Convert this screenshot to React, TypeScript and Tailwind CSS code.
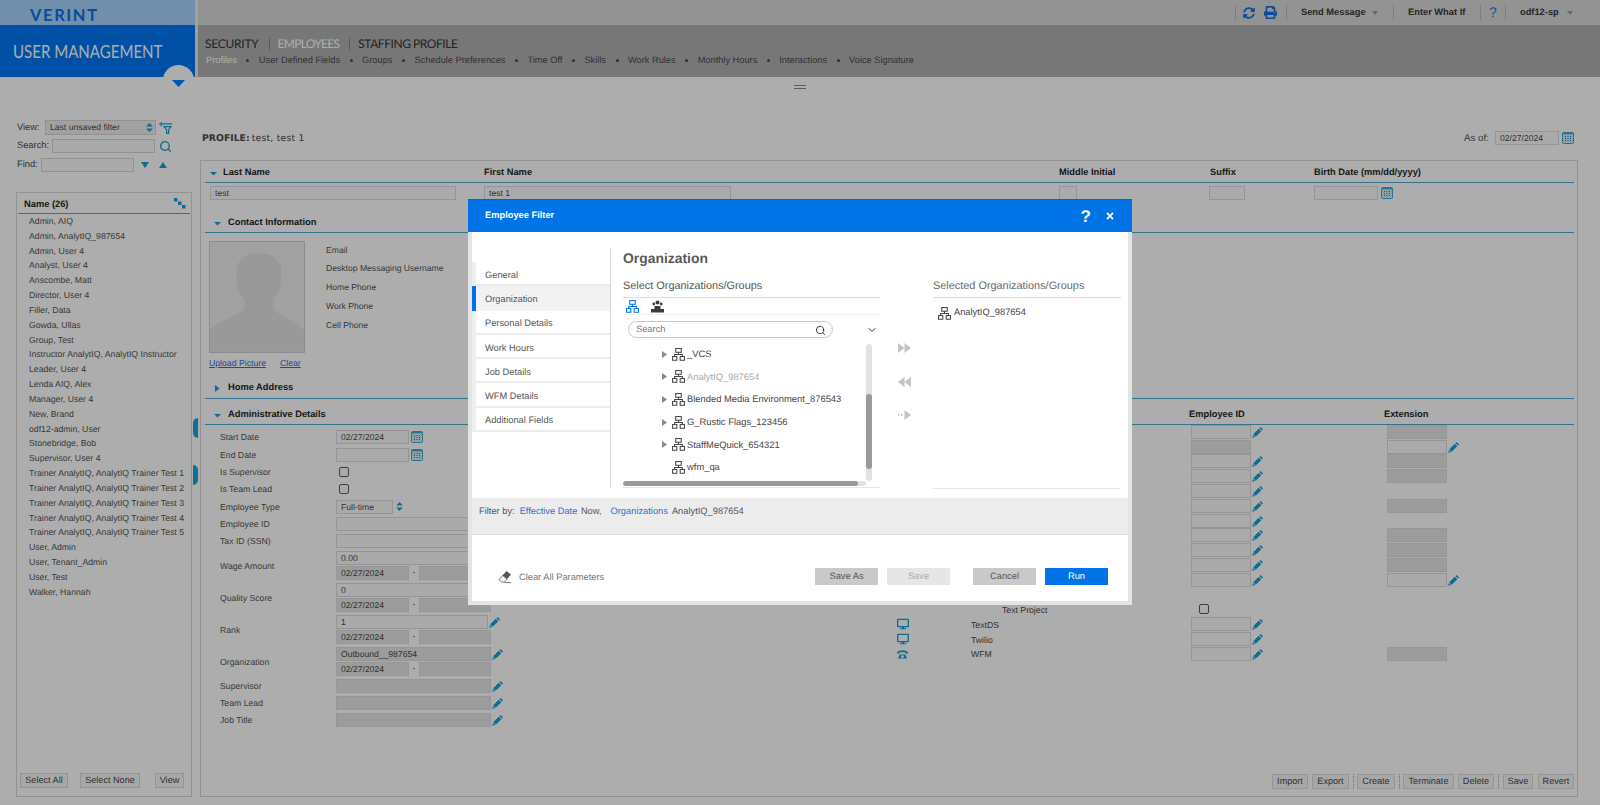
import React from "react";
import { FaPrint, FaSyncAlt, FaDesktop, FaTimes } from "react-icons/fa";
import { Search, ChevronDown } from "lucide-react";

const names = ["Admin, AIQ","Admin, AnalytIQ_987654","Admin, User 4","Analyst, User 4","Anscombe, Matt","Director, User 4","Filler, Data","Gowda, Ullas","Group, Test","Instructor AnalytIQ, AnalytIQ Instructor","Leader, User 4","Lenda AIQ, Alex","Manager, User 4","New, Brand","odf12-admin, User","Stonebridge, Bob","Supervisor, User 4","Trainer AnalytIQ, AnalytIQ Trainer Test 1","Trainer AnalytIQ, AnalytIQ Trainer Test 2","Trainer AnalytIQ, AnalytIQ Trainer Test 3","Trainer AnalytIQ, AnalytIQ Trainer Test 4","Trainer AnalytIQ, AnalytIQ Trainer Test 5","User, Admin","User, Tenant_Admin","User, Test","Walker, Hannah"];
const subTabs = ["Profiles","User Defined Fields","Groups","Schedule Preferences","Time Off","Skills","Work Rules","Monthly Hours","Interactions","Voice Signature"];
const navItems = ["General","Organization","Personal Details","Work Hours","Job Details","WFM Details","Additional Fields"];
const tree = [
  { t: "_VCS", arrow: true, muted: false },
  { t: "AnalytIQ_987654", arrow: true, muted: true },
  { t: "Blended Media Environment_876543", arrow: true, muted: false },
  { t: "G_Rustic Flags_123456", arrow: true, muted: false },
  { t: "StaffMeQuick_654321", arrow: true, muted: false },
  { t: "wfm_qa", arrow: false, muted: false },
];

function OrgIcon({ className }: { className?: string }) {
  return (
    <svg viewBox="0 0 14 14" className={className} fill="none" stroke="currentColor" strokeWidth="1.1">
      <rect x="4" y="0.6" width="6" height="4" />
      <path d="M7 4.6V7M2.8 9.2V7H11.2V9.2" />
      <rect x="0.6" y="9.2" width="4.6" height="4" />
      <rect x="8.8" y="9.2" width="4.6" height="4" />
    </svg>
  );
}
function Pencil() {
  return (
    <svg viewBox="0 0 12 12" className="w-[12px] h-[12px] shrink-0 text-[#14a0d4]" fill="currentColor">
      <path d="M8.6.9 11.1 3.4 9.9 4.6 7.4 2.1ZM6.8 2.7 9.3 5.2 3.7 10.8 1.2 8.3ZM.9 8.9 3.1 11.1.3 11.7Z" />
    </svg>
  );
}
function Cal() {
  return (
    <svg viewBox="0 0 12 12" className="w-[12px] h-[12px] shrink-0" fill="none">
      <rect x="0.5" y="0.5" width="11" height="11" rx="1" fill="#d4ecf7" stroke="#3aa9d6" />
      <path d="M1 1.6H11" stroke="#3aa9d6" strokeWidth="1.4" />
      <path d="M3 4.5H4M5.5 4.5H6.5M8 4.5H9M3 6.5H4M5.5 6.5H6.5M8 6.5H9M3 8.5H4M5.5 8.5H6.5M8 8.5H9" stroke="#1a7fb0" />
    </svg>
  );
}
function Spinner({ className }: { className?: string }) {
  return (
    <svg viewBox="0 0 8 11" className={className} fill="#1a9fd0">
      <path d="M4 0 8 4.2H0ZM0 6.8H8L4 11Z" />
    </svg>
  );
}
function Caret({ open }: { open: boolean }) {
  return (
    <svg viewBox={open ? "0 0 7 5" : "0 0 6 7"} className={open ? "w-[7px] h-[5px] text-[#1a9fd0]" : "w-[6px] h-[7px] text-[#1a9fd0]"} fill="currentColor">
      {open ? <path d="M0 1H7L3.5 4.5Z" /> : <path d="M1 0 5.5 3.5 1 7Z" />}
    </svg>
  );
}
function Inp({ className, children }: { className: string; children?: React.ReactNode }) {
  return <div className={"h-[14px] border border-[#dcdcdc] bg-[#fbfbfb] px-[4px] text-[8.6px] leading-[12px] text-[#4a4a4a] " + className}>{children}</div>;
}
function Dis({ className, children }: { className: string; children?: React.ReactNode }) {
  return <div className={"h-[14px] border border-[#dedede] bg-[#e6e6e6] px-[4px] text-[8.6px] leading-[12px] text-[#4a4a4a] " + className}>{children}</div>;
}
function Btn({ className, children }: { className: string; children: React.ReactNode }) {
  return <div className={"h-[15px] border border-[#dcdcdc] bg-[#f6f6f6] flex items-center justify-center text-[9.1px] text-[#4a4a4a] " + className}>{children}</div>;
}
function Dashed({ className }: { className: string }) {
  return <div className={"h-[15px] w-0 border-l border-dotted border-[#a0a0a0] " + className} />;
}
function Check({ className }: { className?: string }) {
  return <div className={"w-[10px] h-[10px] rounded-[2px] border border-[#5c5c5c] bg-[#fbfbfb] " + (className ?? "")} />;
}
function DateRange({ withDate }: { withDate: string }) {
  return (
    <div className="flex items-center mt-[1px]">
      <Dis className="w-[73px]">{withDate}</Dis>
      <span className="w-[10px] text-center text-[8.6px] text-[#4a4a4a]">-</span>
      <Dis className="w-[72px]" />
    </div>
  );
}
function Field({ label, h, tall, children }: { label: string; h: string; tall?: boolean; children: React.ReactNode }) {
  return (
    <div className={"flex items-start " + h}>
      <div className={"w-[131px] pl-[15px] pt-[2px] text-[8.7px] text-[#555] flex items-center " + (tall ? "h-[31px]" : "h-[14px]")}>{label}</div>
      <div>{children}</div>
    </div>
  );
}
function Section({ open, title, h, pt, x, children }: { open: boolean; title: string; h: string; pt: string; x?: boolean; children?: React.ReactNode }) {
  return (
    <div className={"flex items-center border-b border-[#4fa9d8] shrink-0 " + h + " " + pt}>
      <div className="w-[23px] flex justify-center pl-[1px] pt-[1px]"><Caret open={open} /></div>
      <span className={"text-[9.3px] font-bold text-[#262626] " + (x ? "w-[961px]" : "")}>{title}</span>
      {children}
    </div>
  );
}

const rows: { icon?: "d" | "p"; label?: string; emp: "l" | "g" | "lp" | "n" | "c"; ext: "n" | "g" | "lp" }[] = [
  { emp: "lp", ext: "g" }, { emp: "g", ext: "lp" }, { emp: "lp", ext: "g" }, { emp: "lp", ext: "g" },
  { emp: "lp", ext: "n" }, { emp: "lp", ext: "g" }, { emp: "lp", ext: "n" }, { emp: "lp", ext: "g" },
  { emp: "lp", ext: "g" }, { emp: "lp", ext: "g" }, { emp: "lp", ext: "lp" }, { emp: "n", ext: "n" },
  { emp: "c", ext: "n", label: "Text Project" },
  { icon: "d", label: "TextDS", emp: "lp", ext: "n" },
  { icon: "d", label: "Twilio", emp: "lp", ext: "n" },
  { icon: "p", label: "WFM", emp: "lp", ext: "g" },
];

export default function App() {
  return (
    <div className="relative w-[1600px] h-[805px] overflow-hidden bg-white font-['Liberation_Sans',Arial,sans-serif] text-[9.3px] text-[#555] [text-rendering:geometricPrecision]">
      {/* top strip */}
      <div className="flex h-[25px]">
        <div className="w-[195px] bg-[#a6d4ff] pl-[30px] pt-[5px] flex items-center">
          <span className="font-['Lato',sans-serif] font-bold text-[16.5px] tracking-[1.6px] text-[#0f6fe0] leading-none">VERINT</span>
        </div>
        <div className="w-[3px] bg-[#ececec]" />
        <div className="flex-1 bg-[#d9d9d9] flex items-center font-bold text-[#3a3a3a]">
          <div className="ml-[1037px] h-[15px] border-l border-[#b8b8b8]" />
          <FaSyncAlt className="ml-[7px] w-[12px] h-[12px] text-[#1371e0]" />
          <FaPrint className="ml-[9px] w-[13px] h-[13px] text-[#1371e0]" />
          <div className="ml-[9px] h-[15px] border-l border-[#b8b8b8]" />
          <span className="ml-[14px] pt-[1px] w-[65px] whitespace-nowrap">Send Message</span>
          <svg viewBox="0 0 6 4" className="ml-[6px] w-[6px] h-[4px]" fill="#9a9a9a"><path d="M0 0H6L3 4Z" /></svg>
          <div className="ml-[15px] h-[15px] border-l border-[#b8b8b8]" />
          <span className="ml-[14px] pt-[1px] w-[58px] whitespace-nowrap">Enter What If</span>
          <div className="ml-[14px] h-[15px] border-l border-[#b8b8b8]" />
          <span className="ml-[8px] w-[8px] text-[14px] font-normal text-[#1371e0]">?</span>
          <div className="ml-[8px] h-[15px] border-l border-[#b8b8b8]" />
          <span className="ml-[14px] pt-[1px] w-[41px] whitespace-nowrap">odf12-sp</span>
          <svg viewBox="0 0 6 4" className="ml-[6px] w-[6px] h-[4px]" fill="#9a9a9a"><path d="M0 0H6L3 4Z" /></svg>
        </div>
      </div>
      {/* nav band */}
      <div className="flex h-[52px]">
        <div className="w-[195px] bg-[#0076f5] pl-[13px] pt-[13px]">
          <span className="inline-block origin-left scale-x-[0.836] font-['Lato',sans-serif] text-[18px] leading-[26px] text-white whitespace-nowrap">USER MANAGEMENT</span>
        </div>
        <div className="w-[3px] bg-[#e8e8e8]" />
        <div className="flex-1 bg-[#b0b0b0] pl-[7px] pt-[11px]">
          <div className="flex items-center font-['Lato',sans-serif] text-[12px] leading-[16px] text-[#333]">
            <span className="tracking-[-0.25px]">SECURITY</span>
            <span className="ml-[10px] h-[12px] border-l border-[#888]" />
            <span className="ml-[8px] tracking-[-0.7px] text-white">EMPLOYEES</span>
            <span className="ml-[10px] h-[12px] border-l border-[#888]" />
            <span className="ml-[8px] tracking-[-0.45px]">STAFFING PROFILE</span>
          </div>
          <div className="flex items-center mt-[2px] pl-[1px] text-[9.25px] text-[#4a4a4a]">
            {subTabs.map((t, i) => (
              <React.Fragment key={t}>
                {i > 0 && <span className="mx-[9.5px] w-[3px] h-[3px] rounded-full bg-[#4a4a4a]" />}
                <span className={i === 0 ? "text-white whitespace-nowrap" : "whitespace-nowrap"}>{t}</span>
              </React.Fragment>
            ))}
          </div>
        </div>
      </div>
      {/* drag handle */}
      <div className="h-[20px] flex items-center justify-center">
        <div className="w-[12px] h-[4px] border-y border-[#8a8a8a]" />
      </div>
      {/* content */}
      <div className="flex">
        <aside className="w-[200px] shrink-0 pl-[16px] pt-[23px]">
          <div className="flex items-center h-[15px] text-[9.3px] text-[#4a4a4a]">
            <span className="w-[29px] pl-[1px]">View:</span>
            <div className="w-[111px] h-[15px] border border-[#d6d6d6] bg-[#ededed] flex items-center pl-[4px] text-[8.6px]">
              <span className="flex-1">Last unsaved filter</span>
              <Spinner className="w-[7px] h-[9px] mr-[2px]" />
            </div>
            <svg viewBox="0 0 13 12" className="ml-[3px] w-[13px] h-[12px] text-[#14a0d4]" fill="none" stroke="currentColor" strokeWidth="1.2">
              <path d="M0 2H4.5M2.2 0V4.2M3.5 1.8H13M5 4.6H12L9.6 7.6V11.4H7.6V7.6Z" />
            </svg>
          </div>
          <div className="flex items-center h-[14px] mt-[4px] text-[9.3px] text-[#4a4a4a]">
            <span className="w-[36px] pl-[1px]">Search:</span>
            <div className="w-[103px] h-[14px] border border-[#d6d6d6] bg-[#fbfbfb]" />
            <Search className="ml-[4px] w-[13px] h-[13px] text-[#14a0d4]" strokeWidth={2.6} />
          </div>
          <div className="flex items-center h-[14px] mt-[5px] text-[9.3px] text-[#4a4a4a]">
            <span className="w-[25px] pl-[1px]">Find:</span>
            <div className="w-[93px] h-[14px] border border-[#d6d6d6] bg-[#fbfbfb]" />
            <svg viewBox="0 0 8 6" className="ml-[7px] w-[8px] h-[6px]" fill="#14a0d4"><path d="M0 0H8L4 6Z" /></svg>
            <svg viewBox="0 0 8 6" className="ml-[10px] w-[8px] h-[6px]" fill="#14a0d4"><path d="M0 6H8L4 0Z" /></svg>
          </div>
          <div className="mt-[20px] w-[176px] h-[605px] border border-[#d8d8d8] flex flex-col">
            <div className="mx-[1px] h-[21px] pt-[3px] border-b border-[#4fa9d8] flex items-center pl-[6px] pr-[4px] shrink-0">
              <span className="flex-1 text-[9.3px] font-bold text-[#262626]">Name (26)</span>
              <svg viewBox="0 0 12 11" className="w-[12px] h-[11px] -mt-[3px]" fill="#1a9fd0"><rect x="0" y="0" width="3.5" height="3.5" /><rect x="4" y="3.5" width="3.5" height="3.5" /><rect x="8" y="7" width="3.5" height="3.5" /></svg>
            </div>
            <div className="flex-1">
              {names.map((n) => (
                <div key={n} className="h-[14.84px] pl-[12px] leading-[14.84px] text-[8.7px] text-[#555] whitespace-nowrap">{n}</div>
              ))}
            </div>
            <div className="flex items-center pl-[3px] pb-[8px]">
              <Btn className="w-[48px]">Select All</Btn>
              <Btn className="w-[60px] ml-[12px]">Select None</Btn>
              <Btn className="w-[29px] ml-[15px]">View</Btn>
            </div>
          </div>
        </aside>
        <main className="flex-1 min-w-0">
          <div className="flex items-center h-[14px] mt-[34px] pl-[2px] pr-[26px]">
            <span className="font-['DejaVu_Sans',sans-serif] font-bold pt-[1px] text-[9.3px] text-[#4a4a4a]">PROFILE:</span>
            <span className="ml-[2px] font-['DejaVu_Sans',sans-serif] tracking-[0.2px] pt-[1px] text-[9.3px] text-[#4a4a4a] flex-1">test, test 1</span>
            <span className="pt-[2px] text-[9.8px] text-[#555]">As of:</span>
            <Inp className="ml-[6px] w-[64px]">02/27/2024</Inp>
            <span className="ml-[3px]"><Cal /></span>
          </div>
          <div className="mt-[15px] w-[1378px] h-[637px] border border-[#d8d8d8] pl-[4px] pr-[3px] flex flex-col">
            <div className="flex h-[21.5px] pt-[4px] border-b border-[#4fa9d8] items-center shrink-0">
              <div className="w-[279px] flex items-center font-bold text-[#262626]">
                <span className="ml-[5px] w-[13px]"><Caret open /></span>Last Name
              </div>
              <div className="w-[575px] font-bold text-[#262626]">First Name</div>
              <div className="w-[151px] font-bold text-[#262626]">Middle Initial</div>
              <div className="w-[104px] font-bold text-[#262626]">Suffix</div>
              <div className="font-bold text-[#262626]">Birth Date (mm/dd/yyyy)</div>
            </div>
            <div className="flex mt-[3px] items-center shrink-0">
              <div className="w-[279px] pl-[5px]"><Inp className="w-[246px]">test</Inp></div>
              <div className="w-[575px]"><Inp className="w-[247px]">test 1</Inp></div>
              <div className="w-[151px]"><Inp className="w-[18px]" /></div>
              <div className="w-[104px]"><Inp className="w-[36px] -ml-[1px]" /></div>
              <div className="flex items-center"><Inp className="w-[64px]" /><span className="ml-[3px]"><Cal /></span></div>
            </div>
            <Section open title="Contact Information" h="h-[33px]" pt="pt-[15px]" />
            <div className="h-[143px] flex shrink-0 pt-[8px] pl-[4px]">
              <div className="w-[117px]">
                <svg viewBox="0 0 96 112" className="w-[96px] h-[112px] border border-[#cfcfcf]">
                  <defs>
                    <pattern id="hatch" width="3" height="3" patternUnits="userSpaceOnUse" patternTransform="rotate(45)">
                      <rect width="3" height="3" fill="#f2f2f2" />
                      <rect width="1" height="3" fill="#e6e6e6" />
                    </pattern>
                  </defs>
                  <rect width="96" height="112" fill="url(#hatch)" />
                  <path d="M0 90C12 78 30 75 35 68L35 58C27 50 27 40 27 30C27 18 36 11 50 11C64 11 73 18 73 30C73 40 73 50 65 58L65 68C70 75 86 78 96 90L96 112L0 112Z" fill="#e2e2e2" />
                </svg>
                <div className="flex mt-[4px] text-[8.7px] text-[#2f6fe0] underline">
                  <span>Upload Picture</span>
                  <span className="ml-[14px]">Clear</span>
                </div>
              </div>
              <div className="text-[8.6px] text-[#555]">
                {["Email", "Desktop Messaging Username", "Home Phone", "Work Phone", "Cell Phone"].map((l) => (
                  <div key={l} className="h-[18.75px] leading-[18.75px]">{l}</div>
                ))}
              </div>
            </div>
            <Section open={false} title="Home Address" h="h-[23px]" pt="pt-[3px]" />
            <Section open title="Administrative Details" h="h-[26px]" pt="pt-[7px]" x>
              <span className="w-[195px] text-[9.3px] font-bold text-[#262626]">Employee ID</span>
              <span className="text-[9.3px] font-bold text-[#262626]">Extension</span>
            </Section>
            <div className="flex flex-1">
              <div className="w-[300px] pt-[5px] shrink-0">
                <Field label="Start Date" h="h-[18px]">
                  <div className="flex items-center"><Inp className="w-[73px]">02/27/2024</Inp><span className="ml-[2px]"><Cal /></span></div>
                </Field>
                <Field label="End Date" h="h-[17px]">
                  <div className="flex items-center"><Inp className="w-[73px]" /><span className="ml-[2px]"><Cal /></span></div>
                </Field>
                <Field label="Is Supervisor" h="h-[17px]"><Check className="ml-[3px] mt-[2px]" /></Field>
                <Field label="Is Team Lead" h="h-[18px]"><Check className="ml-[3px] mt-[2px]" /></Field>
                <Field label="Employee Type" h="h-[17px]">
                  <div className="flex items-center"><Inp className="w-[57px]">Full-time</Inp><Spinner className="ml-[3px] w-[7px] h-[9px]" /></div>
                </Field>
                <Field label="Employee ID" h="h-[17px]"><Inp className="w-[155px]" /></Field>
                <Field label="Tax ID (SSN)" h="h-[17px]"><Inp className="w-[155px]" /></Field>
                <Field label="Wage Amount" h="h-[32px]" tall><Inp className="w-[155px]">0.00</Inp><DateRange withDate="02/27/2024" /></Field>
                <Field label="Quality Score" h="h-[32px]" tall><Inp className="w-[155px]">0</Inp><DateRange withDate="02/27/2024" /></Field>
                <Field label="Rank" h="h-[32px]" tall>
                  <div className="flex items-center"><Inp className="w-[152px]">1</Inp><span className="ml-[1px]"><Pencil /></span></div>
                  <DateRange withDate="02/27/2024" />
                </Field>
                <Field label="Organization" h="h-[32px]" tall>
                  <div className="flex items-center"><Dis className="w-[155px]">Outbound__987654</Dis><span className="ml-[1px]"><Pencil /></span></div>
                  <DateRange withDate="02/27/2024" />
                </Field>
                <Field label="Supervisor" h="h-[17px]"><div className="flex items-center"><Dis className="w-[155px]" /><span className="ml-[1px]"><Pencil /></span></div></Field>
                <Field label="Team Lead" h="h-[17px]"><div className="flex items-center"><Dis className="w-[155px]" /><span className="ml-[1px]"><Pencil /></span></div></Field>
                <Field label="Job Title" h="h-[17px]"><div className="flex items-center"><Dis className="w-[155px]" /><span className="ml-[1px]"><Pencil /></span></div></Field>
              </div>
              <div className="pl-[392px]">
                {rows.map((r, i) => (
                  <div key={i} className="flex items-center h-[14.8px]">
                    <div className="w-[74px]">
                      {r.icon === "d" && <FaDesktop className="w-[12px] h-[12px] text-[#14a0d4]" />}
                      {r.icon === "p" && (
                        <svg viewBox="0 0 12 11" className="w-[11px] h-[10px] text-[#14a0d4]" fill="currentColor">
                          <path d="M0 3.5C2 .5 10 .5 12 3.5V5H9V3.5H3V5H0ZM3 6H9L11 10.5H1ZM6 6.8A1.6 1.6 0 1 0 6 10 1.6 1.6 0 1 0 6 6.8Z" />
                        </svg>
                      )}
                    </div>
                    <div className={"w-[220px] pt-[2px] text-[8.7px] text-[#4a4a4a] whitespace-nowrap " + (r.emp === "c" ? "pl-[31px]" : "")}>{r.label}</div>
                    <div className="w-[196px] flex items-center">
                      {r.emp === "lp" && <><Inp className="w-[60px]" /><span className="ml-[1px]"><Pencil /></span></>}
                      {r.emp === "g" && <Dis className="w-[60px] bg-[#e2e2e2]" />}
                      {r.emp === "c" && <Check className="ml-[8px]" />}
                    </div>
                    <div className="flex items-center">
                      {r.ext === "lp" && <><Inp className="w-[60px]" /><span className="ml-[1px]"><Pencil /></span></>}
                      {r.ext === "g" && <Dis className="w-[60px] bg-[#e2e2e2]" />}
                    </div>
                  </div>
                ))}
              </div>
            </div>
            <div className="flex items-center justify-end pb-[7px]">
              <Btn className="w-[36px]">Import</Btn>
              <Btn className="w-[37px] ml-[4px]">Export</Btn>
              <Dashed className="ml-[3.5px] mr-[3.5px]" />
              <Btn className="w-[38px]">Create</Btn>
              <Dashed className="ml-[3.5px] mr-[3.5px]" />
              <Btn className="w-[51px]">Terminate</Btn>
              <Btn className="w-[36px] ml-[4px]">Delete</Btn>
              <Dashed className="ml-[4px] mr-[4px]" />
              <Btn className="w-[30px]">Save</Btn>
              <Btn className="w-[36px] ml-[5px]">Revert</Btn>
            </div>
          </div>
        </main>
      </div>
      {/* dim overlay */}
      <div className="absolute inset-0 bg-[rgba(0,0,0,0.32)]" />
      <div className="absolute left-[163px] top-[65px] w-[31px] h-[31px] rounded-full bg-[#adadad] flex items-start justify-center pt-[15px]">
        <svg viewBox="0 0 13 7" className="w-[13px] h-[7px]" fill="#0055b5"><path d="M0 0H13L6.5 7Z" /></svg>
      </div>
      <div className="absolute left-[193px] top-[418px] w-[5px] h-[20px] rounded-l-full bg-[#0f6f95]" />
      <div className="absolute left-[193px] top-[465px] w-[5px] h-[20px] rounded-r-full bg-[#0f6f95]" />
      {/* modal */}
      <div className="absolute left-[468px] top-[199px] w-[664px] h-[406px] flex flex-col bg-white">
        <div className="h-[33px] shrink-0 bg-[#0073e6] border-t border-[#0a66c2] flex items-center pl-[17px] pr-[17px] text-white">
          <span className="flex-1 text-[9.3px] font-bold">Employee Filter</span>
          <span className="text-[17px] font-bold leading-none mr-[14px]">?</span>
          <FaTimes className="w-[10px] h-[10px]" />
        </div>
        <div className="flex-1 min-h-0 flex flex-col border-x-4 border-b-4 border-[#e4e4e4]">
          <div className="h-[266px] flex shrink-0">
            <div className="w-[138px] pt-[30px] shrink-0">
              <div className="border-l-4 border-[#eeeeee]">
                {navItems.map((n, i) => (
                  <div key={n} className={i === 1 ? "relative -ml-[4px] border-l-4 border-[#0073e6] h-[24.3px] pl-[9px] pt-[4px] bg-[#f2f2f2] flex items-center text-[#555]" : "h-[24.3px] pl-[9px] pt-[5px] border-b-2 border-[#ececec] flex items-center text-[#555]"}>{n}</div>
                ))}
              </div>
            </div>
            <div className="mt-[16px] mb-[10px] border-l border-[#dcdcdc]" />
            <div className="w-[257px] ml-[12px] pt-[18px] shrink-0">
              <div className="h-[18px] flex items-center text-[13.9px] font-bold text-[#5a5a5a] leading-none">Organization</div>
              <div className="mt-[9px] h-[21px] pt-[1px] border-b border-[#dcdcdc] text-[10.9px] text-[#555] leading-[16px]">Select Organizations/Groups</div>
              <div className="h-[17px] pt-[1px] border-b border-[#f0f0f0] flex items-center pl-[3px]">
                <OrgIcon className="w-[13px] h-[13px] text-[#0073e6]" />
                <svg viewBox="0 0 13 13" className="ml-[12px] w-[13px] h-[13px] text-[#3c3c3c]" fill="currentColor">
                  <circle cx="6.5" cy="2.5" r="2" /><circle cx="2.8" cy="4" r="1.4" /><circle cx="10.2" cy="4" r="1.4" />
                  <path d="M3.5 6H9.5V9H13V12.5H0V9H3.5Z" />
                </svg>
              </div>
              <div className="flex items-center mt-[6px] h-[17px]">
                <div className="ml-[5px] w-[205px] h-[17px] rounded-full border border-[#c8c8c8] flex items-center pl-[7px] pr-[6px] pt-[1px] text-[9.3px] text-[#777]">
                  <span className="flex-1">Search</span>
                  <Search className="w-[11px] h-[11px] text-[#333]" />
                </div>
                <ChevronDown className="ml-[33px] w-[12px] h-[12px] text-[#333]" />
              </div>
              <div className="flex h-[138px] mt-[5px]">
                <div className="w-[243px] text-[9.4px] text-[#444]">
                  {tree.map((r) => (
                    <div key={r.t} className="h-[22.6px] flex items-center pl-[39px]">
                      <span className="w-[10px]">
                        {r.arrow && <svg viewBox="0 0 5 7" className="w-[5px] h-[7px]" fill="#8a8a8a"><path d="M0 0 5 3.5 0 7Z" /></svg>}
                      </span>
                      <OrgIcon className="w-[13px] h-[13px] text-[#444] shrink-0" />
                      <span className={r.muted ? "ml-[2px] text-[#aaaaaa] whitespace-nowrap" : "ml-[2px] whitespace-nowrap"}>{r.t}</span>
                    </div>
                  ))}
                </div>
                <div className="w-[6px] h-[137px] mt-[1px] rounded-full bg-[#e2e2e2] overflow-hidden">
                  <div className="mt-[50px] h-[75px] bg-[#9a9a9a] rounded-full" />
                </div>
              </div>
              <div className="w-[243px] h-[5px] rounded-full bg-[#e2e2e2] overflow-hidden">
                <div className="w-[235px] h-[5px] rounded-full bg-[#9a9a9a]" />
              </div>
              <div className="mt-[1px] border-b border-[#e6e6e6]" />
            </div>
            <div className="w-[53px] shrink-0 pl-[18px] pt-[111px] text-[#c4c4c4]">
              <svg viewBox="0 0 13 10" className="w-[13px] h-[10px]" fill="currentColor"><path d="M0 0 6.5 5 0 10ZM6.5 0 13 5 6.5 10Z" /></svg>
              <svg viewBox="0 0 13 10" className="mt-[23.5px] w-[13px] h-[10px]" fill="currentColor"><path d="M13 0 6.5 5 13 10ZM6.5 0 0 5 6.5 10Z" /></svg>
              <svg viewBox="0 0 13 10" className="mt-[23.5px] w-[13px] h-[10px]" fill="currentColor"><path d="M6.5 0 13 5 6.5 10ZM0 4H1.5V6H0ZM3 4H4.5V6H3Z" /></svg>
            </div>
            <div className="w-[188px] shrink-0 pt-[45px]">
              <div className="h-[21px] pt-[1px] border-b border-[#dcdcdc] text-[10.9px] leading-[16px] text-[#6a6a6a]">Selected Organizations/Groups</div>
              <div className="h-[28px] pt-[2px] flex items-center pl-[5px] text-[9.3px] text-[#444]">
                <OrgIcon className="w-[13px] h-[13px] shrink-0" />
                <span className="ml-[3px]">AnalytIQ_987654</span>
              </div>
              <div className="mt-[162px] border-b border-[#e6e6e6]" />
            </div>
          </div>
          <div className="h-[37px] shrink-0 bg-[#ececec] border-b border-[#dcdcdc] pl-[7px] pt-[7px] text-[9.3px] text-[#555] flex items-start">
            <span>Filter by:</span>
            <span className="ml-[5px] text-[#2f6fd0]">Effective Date</span>
            <span className="ml-[3.5px]">Now,</span>
            <span className="ml-[9px] text-[#2f6fd0]">Organizations</span>
            <span className="ml-[4px]">AnalytIQ_987654</span>
          </div>
          <div className="flex-1 flex items-start pt-[33px] pl-[26px] pr-[20px]">
            <svg viewBox="0 0 14 14" className="w-[14px] h-[14px] mt-[2px]" fill="none">
              <path d="M8.5 1 13 4.5 9 9 4.5 5.5Z" fill="#555" />
              <path d="M4.5 5.5 9 9 6.5 12H3.5L1 9.5Z" fill="#fff" stroke="#666" strokeWidth="0.9" />
              <path d="M6.5 12.6H13" stroke="#666" strokeWidth="0.9" />
            </svg>
            <span className="ml-[7px] mt-[3px] text-[9.3px] text-[#777]">Clear All Parameters</span>
            <div className="ml-auto flex text-[9.3px]">
              <div className="w-[63px] h-[17px] bg-[#c9c9c9] flex items-center justify-center text-[#555]">Save As</div>
              <div className="ml-[9px] w-[63px] h-[17px] bg-[#e6e6e6] flex items-center justify-center text-[#aaa]">Save</div>
              <div className="ml-[23px] w-[63px] h-[17px] bg-[#c9c9c9] flex items-center justify-center text-[#555]">Cancel</div>
              <div className="ml-[9px] w-[63px] h-[17px] bg-[#0073e6] flex items-center justify-center text-white">Run</div>
            </div>
          </div>
        </div>
      </div>
    </div>
  );
}
